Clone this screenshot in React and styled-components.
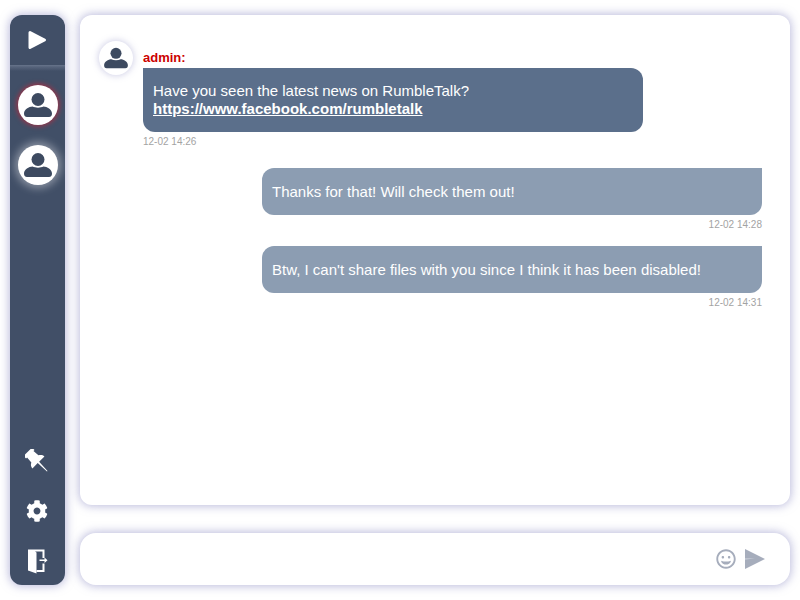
import React from "react";
import styled, { createGlobalStyle } from "styled-components";
import { FaCog, FaRegGrin } from "react-icons/fa";

const Global = createGlobalStyle`
  html, body { margin: 0; padding: 0; background: #fff; }
  body { font-family: "Liberation Sans", Arial, sans-serif; }
`;
const Page = styled.div`
  width: 800px; height: 600px; box-sizing: border-box; padding: 15px 10px 15px 10px;
  display: flex; gap: 15px; overflow: hidden;
`;
const Sidebar = styled.aside`
  width: 55px; flex: none; background: #414f67; border-radius: 12px;
  box-shadow: 0 0 10px 1px rgba(130,130,190,.55);
  display: flex; flex-direction: column; align-items: center;
`;
const Toggle = styled.div`
  height: 50px; width: 100%; flex: none; display: flex; align-items: center; justify-content: center;
`;
const Divider = styled.div`
  width: 100%; height: 6px; flex: none;
  background: linear-gradient(to bottom, #67748b 0, #56637b 2px, #414f67 100%);
`;
const Users = styled.div`
  display: flex; flex-direction: column; gap: 20px; align-items: center; padding-top: 14px; flex: 1;
`;
const SideAvatar = styled.div`
  width: 40px; height: 40px; border-radius: 50%; background: #fff;
  display: flex; align-items: center; justify-content: center;
  box-shadow: ${p => p.$active ? "0 0 4px 2px rgba(175,45,65,.7)" : "0 0 8px 3px rgba(255,255,255,.4)"};
`;
const Tools = styled.div`
  display: flex; flex-direction: column; align-items: center; gap: 24px; padding: 0 1px 11px 0; color: #fff;
`;
const ToolSlot = styled.div`
  width: 26px; height: 26px; display: flex; align-items: center; justify-content: center;
`;
const Right = styled.main`
  flex: 1; display: flex; flex-direction: column; gap: 28px; min-width: 0;
`;
const Card = styled.section`
  height: 490px; box-sizing: border-box; background: #fff; border-radius: 12px;
  box-shadow: 0 0 10px 1px rgba(130,130,190,.55); padding: 26px 28px 0 19px;
  display: flex; flex-direction: column;
`;
const Incoming = styled.div`
  display: flex; gap: 10px; margin-bottom: 20px;
`;
const MsgAvatar = styled.div`
  width: 34px; height: 34px; flex: none; border-radius: 50%; background: #fff;
  display: flex; align-items: center; justify-content: center;
  box-shadow: 0 0 6px 1px rgba(130,130,190,.35);
`;
const Body = styled.div`
  display: flex; flex-direction: column; padding-top: 9px;
`;
const Name = styled.div`
  font-size: 13px; line-height: 16px; font-weight: 700; color: #cc0000; margin-bottom: 2px;
`;
const BubbleIn = styled.div`
  width: 500px; box-sizing: border-box; padding: 14px 10px; background: #5b6f8b;
  border-radius: 0 12px 12px 12px; color: #fff; font-size: 15px; line-height: 18px;
  a { color: #fff; font-weight: 700; text-decoration: underline; }
`;
const Time = styled.div`
  font-size: 10px; line-height: 12px; color: #a3a3a3; margin-top: 4px;
  text-align: ${p => p.$right ? "right" : "left"};
`;
const Outgoing = styled.div`
  align-self: flex-end; width: 500px; margin-bottom: 15px;
`;
const BubbleOut = styled.div`
  box-sizing: border-box; height: 47px; padding: 0 10px; display: flex; align-items: center;
  background: #8c9db2; border-radius: 12px 0 12px 12px; color: #fff; font-size: 15px;
`;
const Composer = styled.div`
  height: 52px; box-sizing: border-box; background: #fff; border-radius: 16px;
  box-shadow: 0 0 10px 1px rgba(130,130,190,.55);
  display: flex; align-items: center; justify-content: flex-end; gap: 9px; padding: 0 25px 0 0;
  color: #a6adbc;
`;

const UserIcon = ({ size }) => (
  <svg width={size} height={size} viewBox="0 0 40 40" fill="#3d4a60">
    <circle cx="20" cy="14.500" r="6.500" />
    <path d="M6 28.500C6 24.500 11 21.500 14.500 21.500c3 1.500 8 1.500 11 0C29 21.500 34 24.500 34 28.500c0 2-1 3.500-3 3.500H9c-2 0-3-1.500-3-3.500z" />
  </svg>
);

const PinIcon = () => (
  <svg width="24" height="24" viewBox="0 0 24 24" fill="#fff">
    <g transform="rotate(-45 12 12)">
      <path d="M6 -1h12v3.500h-1.500l.5 6.500c2 1 3.500 2.500 3.500 5H13l-.6 12.500h-.8L11 14H3.500c0-2.500 1.500-4 3.500-5l.5-6.500H6z" />
    </g>
  </svg>
);

const DoorIcon = () => (
  <svg width="22" height="26" viewBox="0 0 22 26" fill="#fff">
    <path d="M2 1.500h16.500v8.500h-2V3.500H9l1.500 1V25.500L2 22.500z" />
    <path d="M10.500 22h6v-6.500h2V24h-8z" />
    <path d="M13.500 11.500h5V9.500l3 2.700-3 2.700v-2h-5z" />
  </svg>
);

export default function App() {
  return (
    <Page>
      <Global />
      <Sidebar>
        <Toggle>
          <svg width="20" height="20" viewBox="0 0 20 20">
            <path d="M2 2.500 16.500 10 2 17.500z" fill="#fff" stroke="#fff" strokeWidth="3" strokeLinejoin="round" />
          </svg>
        </Toggle>
        <Divider />
        <Users>
          <SideAvatar $active><UserIcon size={40} /></SideAvatar>
          <SideAvatar><UserIcon size={40} /></SideAvatar>
        </Users>
        <Tools>
          <ToolSlot><PinIcon /></ToolSlot>
          <ToolSlot><FaCog size={22} /></ToolSlot>
          <ToolSlot><DoorIcon /></ToolSlot>
        </Tools>
      </Sidebar>
      <Right>
        <Card>
          <Incoming>
            <MsgAvatar><UserIcon size={34} /></MsgAvatar>
            <Body>
              <Name>admin:</Name>
              <BubbleIn>
                Have you seen the latest news on RumbleTalk?<br />
                <a href="#">https://www.facebook.com/rumbletalk</a>
              </BubbleIn>
              <Time>12-02 14:26</Time>
            </Body>
          </Incoming>
          <Outgoing>
            <BubbleOut>Thanks for that! Will check them out!</BubbleOut>
            <Time $right>12-02 14:28</Time>
          </Outgoing>
          <Outgoing>
            <BubbleOut>Btw, I can't share files with you since I think it has been disabled!</BubbleOut>
            <Time $right>12-02 14:31</Time>
          </Outgoing>
        </Card>
        <Composer>
          <FaRegGrin size={20} />
          <svg width="20" height="20" viewBox="0 0 20 20">
            <path d="M0 0 20 10 0 20z" fill="#a6adbc" />
            <path d="M0 9.500h10L0 10.500z" fill="#d6dae2" />
          </svg>
        </Composer>
      </Right>
    </Page>
  );
}
